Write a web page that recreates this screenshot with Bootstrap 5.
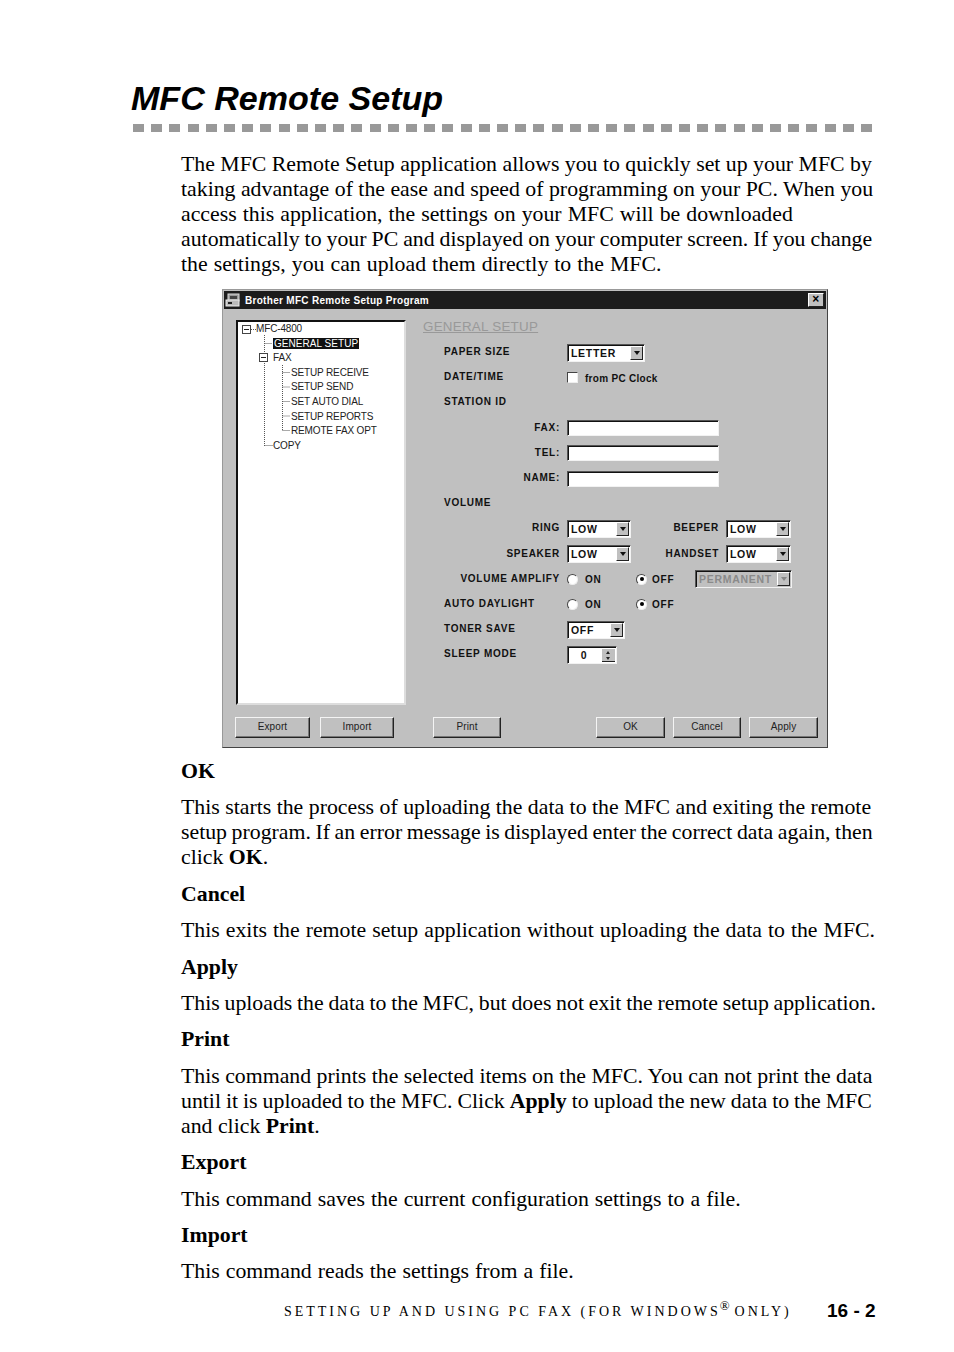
<!DOCTYPE html>
<html lang="en">
<head>
<meta charset="utf-8">
<title>MFC Remote Setup</title>
<link rel="stylesheet" href="https://cdn.jsdelivr.net/npm/bootstrap@5.3.0/dist/css/bootstrap.min.css">
<style>
html,body{margin:0;background:#fff;color:#000}
.sheet{width:954px;height:1352px;padding:77px 0 0 131px;overflow:hidden;font-family:"Liberation Serif",serif;font-size:21.8px;line-height:25px}
.ttl{font-family:"Liberation Sans",sans-serif;font-weight:700;font-style:italic;font-size:34.05px;line-height:42px;margin:0;white-space:nowrap}
.rule{width:739px;height:8px;margin:5px 0 0 2px;background:repeating-linear-gradient(90deg,#999 0 11px,#fff 11px 18.2px)}
.txt{margin-left:50px;white-space:nowrap;padding-top:20px}
.txt p{margin:0 0 11.4px}
.txt h2{font:700 21.8px/25px "Liberation Serif",serif;margin:0 0 11.4px}
.wa{word-spacing:.58px}.wb{word-spacing:-.46px}.wc{word-spacing:-.85px}.wd{word-spacing:-.7px}
.shotwrap{margin:12px 0 11px 41px;width:606px;height:459px}
.dlg{width:606px;height:459px;background:#c0c0c0;border:1px solid #444;border-top-color:#999;border-left-color:#999;padding:1px;font-family:"Liberation Sans",sans-serif;color:#111;position:relative}
.tbar{height:18px;background:#1c1c1c;color:#fff;font-size:10px;font-weight:700;letter-spacing:.3px;line-height:18px;padding-left:1px}
.tlbl{margin-top:1px}
.xbtn{width:16px;height:14px;background:#c0c0c0;border:1px solid;border-color:#fff #222 #222 #fff;color:#000;font-size:12px;line-height:11px;text-align:center;margin-right:2px;font-weight:700}
.mainrow{height:408px}
.tree{width:170px;height:385px;margin:11px 0 0 12px;background:#fff;border:2px solid;border-color:#111 #ddd #ddd #111;position:relative;padding:0;font-size:10px;letter-spacing:-.15px;color:#222;flex:none}
.tree svg{position:absolute;left:0;top:0}
.tn{display:block;height:14.6px;line-height:13px;white-space:nowrap}
.tn1{padding-left:18px}.tn2{padding-left:35px}.tn3{padding-left:53px}
.tsel{background:#111;color:#fff;padding:0 1px;letter-spacing:.05px}
.pane{margin-left:17px;flex:1;min-width:0}
.phead{font-size:13.4px;color:#999;text-decoration:underline;line-height:16px;padding-top:10px;height:30px;letter-spacing:.25px}
.frow{height:25.2px;padding-left:21px;font-size:10px;font-weight:700;letter-spacing:.75px;white-space:nowrap}
.lb{width:116px;flex:none}
.lb2{width:71px;flex:none;margin-left:17px;margin-right:7px}
.ctl{margin-left:7px}
.cmb,.fld,.chk,.rad,.rt,.rt2{margin-top:2px}
.pcl{margin:3px 0 0 7px;letter-spacing:.29px}
.cmb{height:18px;background:#fff;border:1px solid;border-color:#555 #f2f2f2 #f2f2f2 #555;box-shadow:inset 1px 1px 0 #111;padding-left:3px;font-size:10.5px;line-height:17px;letter-spacing:.7px;position:relative;flex:none}
.cmb.off{background:#c0c0c0;color:#8a8a8a}
.arw{position:absolute;right:1px;top:1px;width:13px;height:14px;background:#c0c0c0;border:1px solid;border-color:#fff #222 #222 #fff}
.arw::after{content:"";position:absolute;left:3px;top:4px;border:3px solid transparent;border-top:4px solid #111;border-bottom:0}
.off .arw::after{border-top-color:#888}
.w78{width:78px}.w64{width:64px}.w65{width:65px}.w58{width:58px}.w97{width:97px}.w50{width:50px}
.fld{width:152px;height:16px;background:#fff;border:1px solid;border-color:#555 #f2f2f2 #f2f2f2 #555;box-shadow:inset 1px 1px 0 #111;border-radius:0;padding:0;flex:none}
.chk{width:11px;height:11px;background:#fff;border:1px solid;border-color:#444 #eee #eee #444;flex:none}
.rad{width:11px;height:11px;border-radius:50%;background:#fff;border:1px solid;border-color:#444 #eee #eee #444;flex:none;position:relative;display:block}
.rad.on::after{content:"";position:absolute;left:2.5px;top:2.5px;width:4px;height:4px;border-radius:50%;background:#000}
.rt{width:51px;margin-left:7px;flex:none}
.rt2{width:43px;margin-left:5px;flex:none}
.spin{position:relative;text-align:center;padding:0 16px 0 0}
.sarw{position:absolute;right:1px;top:1px;width:13px;height:14px;background:#c0c0c0;border-top:1px solid #fff;border-bottom:1px solid #222}
.sarw::before{content:"";position:absolute;left:4px;top:2px;border:2.5px solid transparent;border-bottom:3px solid #222;border-top:0}
.sarw::after{content:"";position:absolute;left:4px;top:8px;border:2.5px solid transparent;border-top:3px solid #222;border-bottom:0}
.fbar{padding-left:11px;height:21px}
.wbtn{height:21px;padding:0 0 2px;border-radius:0;background:#c0c0c0;border:1px solid;border-color:#f4f4f4 #222 #222 #f4f4f4;box-shadow:inset -1px -1px 0 #777;color:#222;font-size:10px;line-height:17px;letter-spacing:.1px;font-family:"Liberation Sans",sans-serif}
.wbtn:hover{background:#c0c0c0;color:#222;border-color:#f4f4f4 #222 #222 #f4f4f4}
.b-export{width:75px}
.b-import{width:74px;margin-left:10px}
.b-print{width:68px;margin-left:39px}
.b-ok{width:69px;margin-left:95px}
.b-cancel{width:68px;margin-left:8px}
.b-apply{width:69px;margin-left:8px}
.foot{margin-left:153px;width:592px;height:30px;padding-top:2px;white-space:nowrap}
.ftxt{font-size:14px;letter-spacing:2.98px;line-height:30px;width:543px;flex:none}
.ftxt sup{font-size:13px;top:-.45em;margin:0 5px 0 -1px;letter-spacing:0;line-height:0}
.fnum{font:700 19px/30px "Liberation Sans",sans-serif;margin-bottom:2px}
</style>
</head>
<body>
<main class="sheet">
  <h1 class="ttl">MFC Remote Setup</h1>
  <div class="rule"></div>
  <div class="txt">
    <p>The MFC Remote Setup application allows you to quickly set up your MFC by<br>taking advantage of the ease and speed of programming on your PC. When you<br><span class="wa">access this application, the settings on your MFC will be downloaded</span><br><span class="wb">automatically to your PC and displayed on your computer screen. If you change</span><br><span class="wa">the settings, you can upload them directly to the MFC.</span></p>
    <div class="shotwrap">
      <div class="dlg d-flex flex-column">
        <div class="tbar d-flex align-items-center justify-content-between">
          <span class="d-flex align-items-center gap-1">
            <svg width="16" height="14" viewBox="0 0 16 14"><rect x="3" y="1" width="11" height="7" fill="#999" stroke="#ddd"/><rect x="5" y="3" width="7" height="3" fill="#444"/><rect x="1" y="7" width="13" height="6" fill="#bbb" stroke="#eee"/><rect x="3" y="9" width="4" height="2" fill="#222"/></svg>
            <span class="tlbl">Brother MFC Remote Setup Program</span>
          </span>
          <span class="xbtn">×</span>
        </div>
        <div class="mainrow d-flex">
          <div class="tree">
            <svg width="166" height="140" viewBox="0 0 166 140">
              <g fill="none" stroke="#555" stroke-dasharray="1 1">
                <path d="M26.5 13V124M26.5 21.500H34M26.5 123.500H35M44.500 43V109M44.500 50.500H52M44.500 65H52M44.500 79.500H52M44.500 94H52M44.500 108.500H52M13 7.500H18"/>
              </g>
              <g fill="#fff" stroke="#444"><rect x="4.500" y="3.500" width="8" height="8"/><rect x="21.500" y="31.500" width="8" height="8"/></g>
              <path d="M6 7.500H11M23 35.500H28" stroke="#222"/>
            </svg>
            <span class="tn tn1 position-relative">MFC-4800</span>
            <span class="tn tn2 position-relative"><span class="tsel">GENERAL SETUP</span></span>
            <span class="tn tn2 position-relative">FAX</span>
            <span class="tn tn3 position-relative">SETUP RECEIVE</span>
            <span class="tn tn3 position-relative">SETUP SEND</span>
            <span class="tn tn3 position-relative">SET AUTO DIAL</span>
            <span class="tn tn3 position-relative">SETUP REPORTS</span>
            <span class="tn tn3 position-relative">REMOTE FAX OPT</span>
            <span class="tn tn2 position-relative">COPY</span>
          </div>
          <div class="pane">
            <div class="phead">GENERAL SETUP</div>
            <div class="frow d-flex align-items-center"><span class="lb">PAPER SIZE</span><div class="cmb ctl w78">LETTER<span class="arw"></span></div></div>
            <div class="frow d-flex align-items-center"><span class="lb">DATE/TIME</span><span class="chk ctl"></span><span class="pcl">from PC Clock</span></div>
            <div class="frow d-flex align-items-center"><span class="lb">STATION ID</span></div>
            <div class="frow d-flex align-items-center"><span class="lb text-end">FAX:</span><input class="fld ctl" type="text" aria-label="FAX"></div>
            <div class="frow d-flex align-items-center"><span class="lb text-end">TEL:</span><input class="fld ctl" type="text" aria-label="TEL"></div>
            <div class="frow d-flex align-items-center"><span class="lb text-end">NAME:</span><input class="fld ctl" type="text" aria-label="NAME"></div>
            <div class="frow d-flex align-items-center"><span class="lb">VOLUME</span></div>
            <div class="frow d-flex align-items-center"><span class="lb text-end">RING</span><div class="cmb ctl w64">LOW<span class="arw"></span></div><span class="lb2 text-end">BEEPER</span><div class="cmb w65">LOW<span class="arw"></span></div></div>
            <div class="frow d-flex align-items-center"><span class="lb text-end">SPEAKER</span><div class="cmb ctl w64">LOW<span class="arw"></span></div><span class="lb2 text-end">HANDSET</span><div class="cmb w65">LOW<span class="arw"></span></div></div>
            <div class="frow d-flex align-items-center"><span class="lb text-end">VOLUME AMPLIFY</span><span class="rad ctl"></span><span class="rt">ON</span><span class="rad on"></span><span class="rt2">OFF</span><div class="cmb off w97">PERMANENT<span class="arw"></span></div></div>
            <div class="frow d-flex align-items-center"><span class="lb">AUTO DAYLIGHT</span><span class="rad ctl"></span><span class="rt">ON</span><span class="rad on"></span><span class="rt2">OFF</span></div>
            <div class="frow d-flex align-items-center"><span class="lb">TONER SAVE</span><div class="cmb ctl w58">OFF<span class="arw"></span></div></div>
            <div class="frow d-flex align-items-center"><span class="lb">SLEEP MODE</span><div class="cmb ctl w50 spin">0<span class="sarw"></span></div></div>
          </div>
        </div>
        <div class="fbar d-flex">
          <button type="button" class="btn wbtn b-export">Export</button>
          <button type="button" class="btn wbtn b-import">Import</button>
          <button type="button" class="btn wbtn b-print">Print</button>
          <button type="button" class="btn wbtn b-ok">OK</button>
          <button type="button" class="btn wbtn b-cancel">Cancel</button>
          <button type="button" class="btn wbtn b-apply">Apply</button>
        </div>
      </div>
    </div>
    <h2>OK</h2>
    <p>This starts the process of uploading the data to the MFC and exiting the remote<br><span class="wc">setup program. If an error message is displayed enter the correct data again, then</span><br>click <b>OK</b>.</p>
    <h2>Cancel</h2>
    <p class="wa">This exits the remote setup application without uploading the data to the MFC.</p>
    <h2>Apply</h2>
    <p class="wd">This uploads the data to the MFC, but does not exit the remote setup application.</p>
    <h2>Print</h2>
    <p>This command prints the selected items on the MFC. You can not print the data<br><span class="wb">until it is uploaded to the MFC. Click <b>Apply</b> to upload the new data to the MFC</span><br>and click <b>Print</b>.</p>
    <h2>Export</h2>
    <p class="wa">This command saves the current configuration settings to a file.</p>
    <h2>Import</h2>
    <p class="wa">This command reads the settings from a file.</p>
  </div>
  <div class="foot d-flex align-items-center">
    <span class="ftxt">SETTING UP AND USING PC FAX (FOR WINDOWS<sup>®</sup>ONLY)</span>
    <span class="fnum">16 - 2</span>
  </div>
</main>
<script src="https://cdn.jsdelivr.net/npm/bootstrap@5.3.0/dist/js/bootstrap.bundle.min.js"></script>
</body>
</html>
